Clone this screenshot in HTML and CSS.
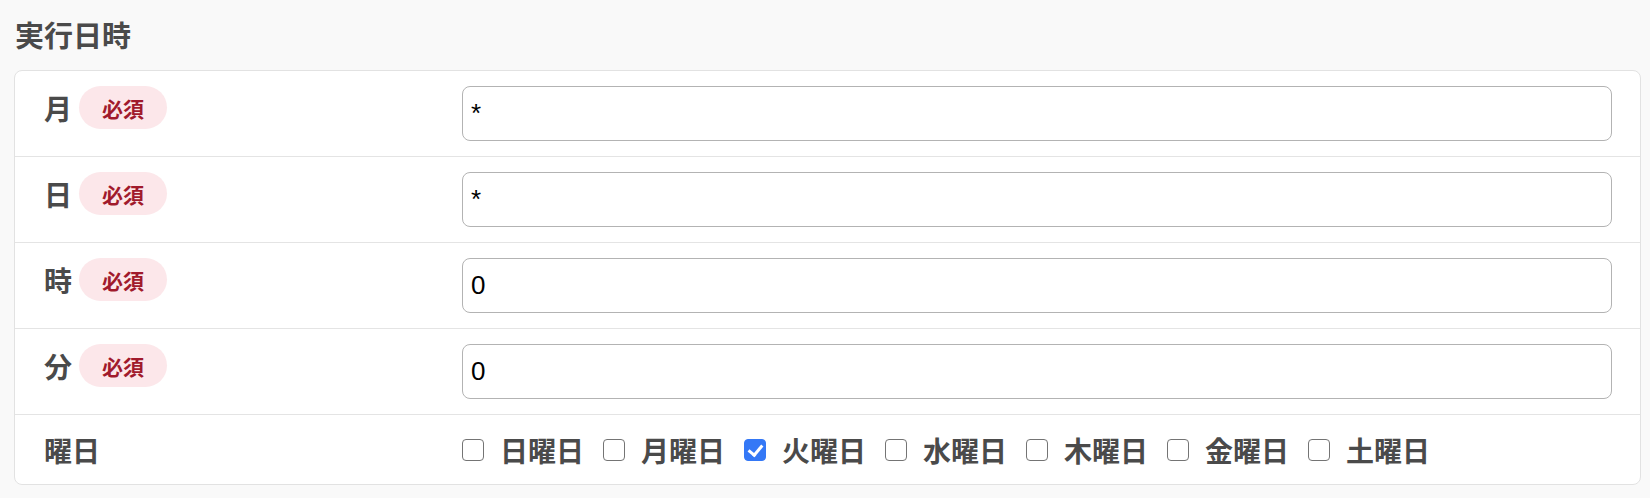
FILE: index.html
```html
<!DOCTYPE html>
<html lang="ja">
<head>
<meta charset="utf-8">
<title>実行日時</title>
<link rel="stylesheet" href="styles.css">
</head>
<body>
<h2 class="section-title">実行日時</h2>
<div class="card">
  <div class="row">
    <div class="label"><span class="name">月</span><span class="badge">必須</span></div>
    <div class="field"><input class="text-input" type="text" value="*"></div>
  </div>
  <div class="row">
    <div class="label"><span class="name">日</span><span class="badge">必須</span></div>
    <div class="field"><input class="text-input" type="text" value="*"></div>
  </div>
  <div class="row">
    <div class="label"><span class="name">時</span><span class="badge">必須</span></div>
    <div class="field"><input class="text-input" type="text" value="0"></div>
  </div>
  <div class="row">
    <div class="label"><span class="name">分</span><span class="badge">必須</span></div>
    <div class="field"><input class="text-input" type="text" value="0"></div>
  </div>
  <div class="row row-last">
    <div class="label"><span class="name">曜日</span></div>
    <div class="field days">
      <label class="day"><input class="check" type="checkbox"><span>日曜日</span></label>
      <label class="day"><input class="check" type="checkbox"><span>月曜日</span></label>
      <label class="day"><input class="check" type="checkbox" checked><span>火曜日</span></label>
      <label class="day"><input class="check" type="checkbox"><span>水曜日</span></label>
      <label class="day"><input class="check" type="checkbox"><span>木曜日</span></label>
      <label class="day"><input class="check" type="checkbox"><span>金曜日</span></label>
      <label class="day"><input class="check" type="checkbox"><span>土曜日</span></label>
    </div>
  </div>
</div>
</body>
</html>
```
FILE: styles.css
```css
* { box-sizing: border-box; }

html, body {
  margin: 0;
  background: #f9f9f9;
}

body {
  padding: 14px 9px 0 14px;
  font-family: "Noto Sans CJK JP", "Noto Sans", sans-serif;
  color: #4a4a4a;
}

.section-title {
  margin: 0 0 16px 1px;
  font-size: 29px;
  line-height: 40px;
  font-weight: 700;
  color: #4a4a4a;
}

.card {
  background: #fff;
  border: 1px solid #e2e2e2;
  border-radius: 8px;
}

.row {
  display: grid;
  grid-template-columns: 418px 1fr;
  padding: 15px 28px 15px 29px;
  border-bottom: 1px solid #e4e4e4;
}

.row-last { border-bottom: none; }

.label {
  display: flex;
  align-items: center;
  gap: 7px;
  height: 43px;
}

.row-last .label { height: 39px; }

.name {
  font-size: 28px;
  font-weight: 700;
  line-height: 1;
}

.badge {
  display: inline-flex;
  align-items: center;
  justify-content: center;
  height: 43px;
  padding: 0 23px;
  border-radius: 22px;
  background: #fce7ea;
  color: #a11a2c;
  font-size: 21px;
  font-weight: 700;
}

.text-input {
  display: block;
  width: 100%;
  height: 55px;
  padding: 0 8px;
  border: 1px solid #b3b3b3;
  border-radius: 8px;
  font-family: "Liberation Sans", Arial, sans-serif;
  font-size: 26px;
  color: #000;
  background: #fff;
  outline: none;
}

.days {
  display: flex;
  align-items: center;
  height: 39px;
  gap: 19px;
}

.day {
  display: flex;
  align-items: center;
  gap: 16px;
  font-size: 28px;
  font-weight: 700;
  line-height: 1;
  color: #4a4a4a;
}

.check {
  appearance: none;
  -webkit-appearance: none;
  position: relative;
  width: 22px;
  height: 22px;
  margin: 0;
  border: 1.5px solid #747474;
  border-radius: 4px;
  background: #fff;
}

.check:checked {
  background: #3478f6;
  border-color: #3478f6;
}

.check:checked::after {
  content: "";
  position: absolute;
  left: 6px;
  top: 2px;
  width: 6px;
  height: 11px;
  border-right: 3px solid #fff;
  border-bottom: 3px solid #fff;
  transform: rotate(40deg);
}
```
